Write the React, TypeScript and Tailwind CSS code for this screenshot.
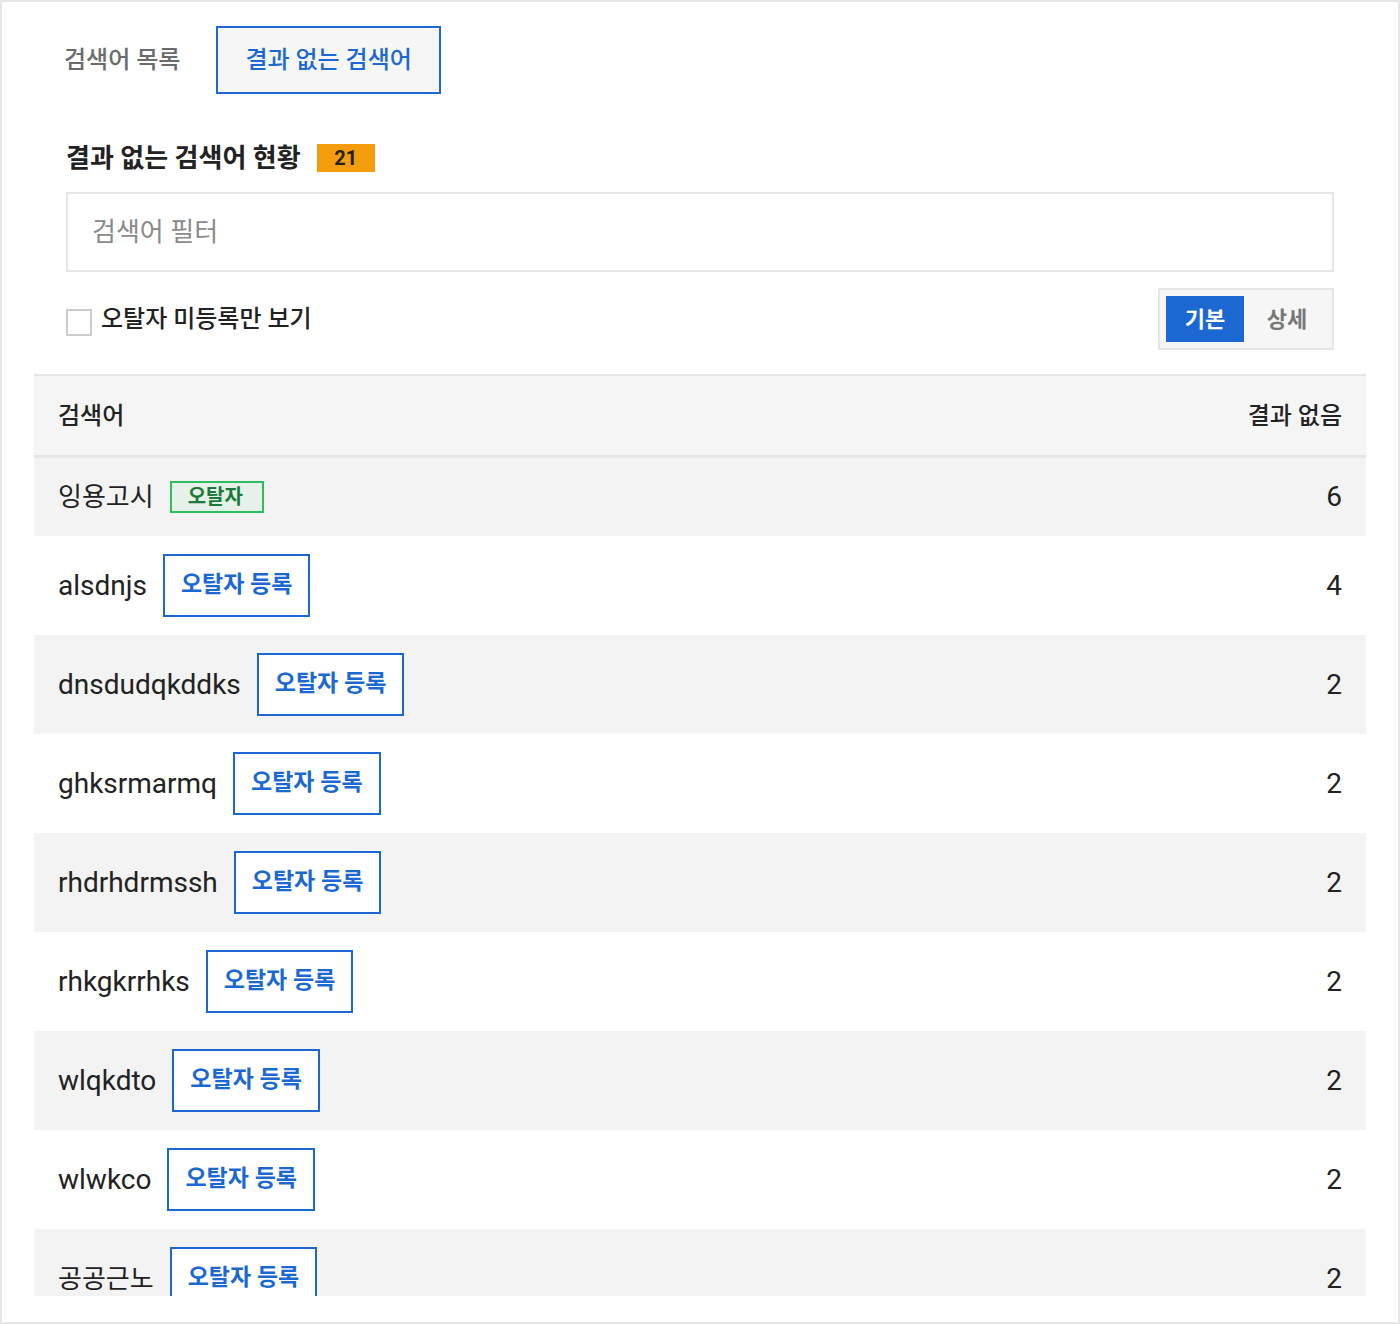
import { useState } from "react";

type KeywordRow = {
  keyword: string;
  count: number;
  registered: boolean;
};

const rows: KeywordRow[] = [
  { keyword: "잉용고시", count: 6, registered: true },
  { keyword: "alsdnjs", count: 4, registered: false },
  { keyword: "dnsdudqkddks", count: 2, registered: false },
  { keyword: "ghksrmarmq", count: 2, registered: false },
  { keyword: "rhdrhdrmssh", count: 2, registered: false },
  { keyword: "rhkgkrrhks", count: 2, registered: false },
  { keyword: "wlqkdto", count: 2, registered: false },
  { keyword: "wlwkco", count: 2, registered: false },
  { keyword: "공공근노", count: 2, registered: false },
];

const hasHangul = (s: string) => /[가-힣]/.test(s);

export default function App() {
  const [view, setView] = useState<"basic" | "detail">("basic");
  const [onlyUnregistered, setOnlyUnregistered] = useState(false);

  return (
    <div className="h-[1324px] w-[1400px] flex flex-col border-2 border-[#e6e6e6] bg-white px-8 pt-6 pb-[26px] font-['Roboto','Noto_Sans_CJK_KR',sans-serif] text-[#222]">
      {/* 탭 */}
      <div className="flex gap-[6px]">
        <button className="h-[68px] px-[28px] border-2 border-transparent text-[24px] font-medium text-[#6b6b6b]">
          검색어 목록
        </button>
        <button className="h-[68px] px-[27px] border-2 border-[#1b68d2] bg-[#f6f6f6] text-[24px] font-medium text-[#1b68d2]">
          결과 없는 검색어
        </button>
      </div>

      <div className="px-8">
        <div className="mt-[50px] flex h-[28px] items-center gap-4">
          <h2 className="text-[26px] font-bold leading-[28px]">결과 없는 검색어 현황</h2>
          <span className="flex h-[28px] w-[58px] items-center justify-center bg-[#f39c0c] text-[20px] font-bold">
            21
          </span>
        </div>

        <input
          className="mt-5 block h-[80px] w-full border-2 border-[#e6e6e6] px-6 text-[26px] outline-none placeholder:text-[#8a8a8a]"
          placeholder="검색어 필터"
        />

        <div className="mt-4 flex h-[62px] items-center justify-between">
          <label className="flex items-center gap-[9px] text-[24px] font-medium">
            <span
              onClick={() => setOnlyUnregistered(!onlyUnregistered)}
              className={`mt-[6px] h-[27px] w-[26px] border-2 ${onlyUnregistered ? "border-[#1b68d2] bg-[#1b68d2]" : "border-[#cccccc] bg-white"}`}
            />
            오탈자 미등록만 보기
          </label>
          <div className="flex h-[62px] w-[176px] border-2 border-[#e6e6e6] bg-[#f6f6f6] p-[6px]">
            <button
              onClick={() => setView("basic")}
              className={`h-full w-[78px] text-[22px] font-bold ${view === "basic" ? "bg-[#1b68d2] text-white" : "text-[#777]"}`}
            >
              기본
            </button>
            <button
              onClick={() => setView("detail")}
              className={`h-full flex-1 pl-1 text-[22px] font-bold ${view === "detail" ? "bg-[#1b68d2] text-white" : "text-[#777]"}`}
            >
              상세
            </button>
          </div>
        </div>
      </div>

      {/* 테이블 */}
      <div className="mt-6 flex-1 overflow-hidden">
        <div className="flex h-[84px] items-center justify-between border-t-2 border-b-[3px] border-[#e6e6e6] bg-[#f5f5f5] px-6 text-[24px] font-medium">
          <span>검색어</span>
          <span>결과 없음</span>
        </div>
        <ul>
          {rows.map((row, i) => (
            <li
              key={row.keyword}
              className={`flex items-center justify-between px-6 ${row.registered ? "py-[23px]" : "py-[18px]"} ${i % 2 === 0 ? "bg-[#f3f3f3]" : "bg-white"}`}
            >
              <div className="flex items-center gap-4">
                <span
                  className={`leading-[32px] ${hasHangul(row.keyword) ? "text-[26px]" : "text-[28px]"}`}
                >
                  {row.keyword}
                </span>
                {row.registered ? (
                  <span className="flex h-[32px] items-center border-2 border-[#2cbf5f] bg-[#e6f2e9] pl-4 pr-[19px] text-[20px] font-bold text-[#1a7a3a]">
                    오탈자
                  </span>
                ) : (
                  <button className="h-[63px] border-2 border-[#1b68d2] bg-white px-4 text-[23px] font-bold text-[#1b68d2]">
                    오탈자 등록
                  </button>
                )}
              </div>
              <span className="text-[28px] leading-[32px]">{row.count}</span>
            </li>
          ))}
        </ul>
      </div>
    </div>
  );
}
